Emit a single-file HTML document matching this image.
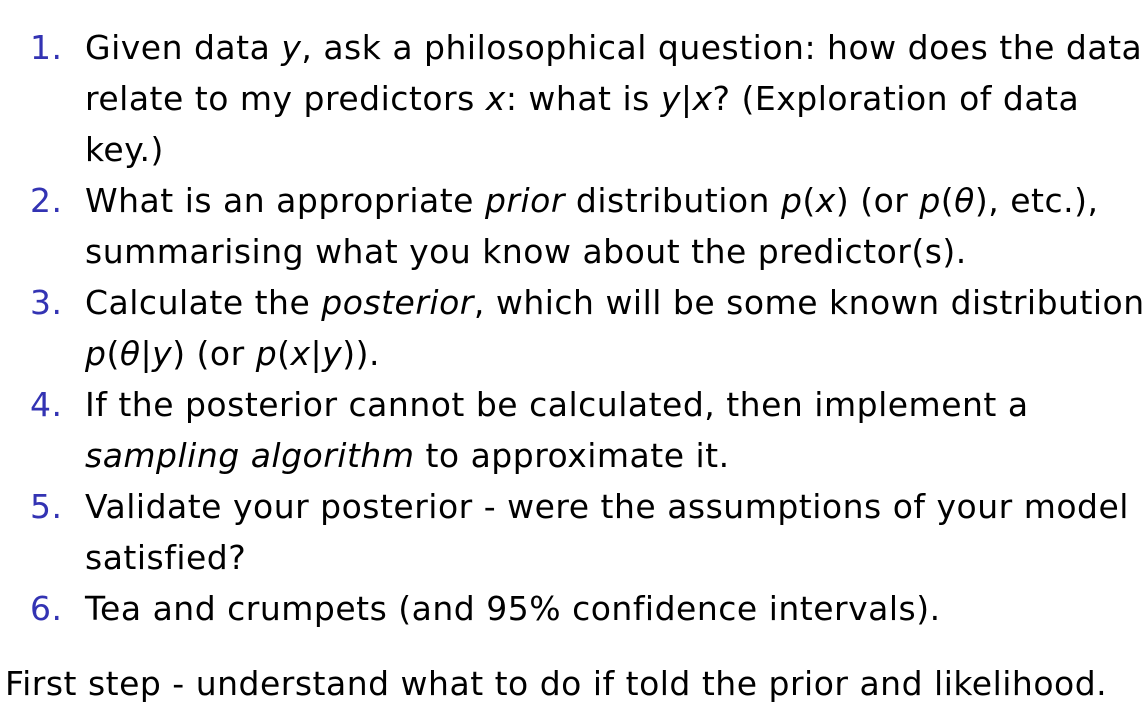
<!DOCTYPE html>
<html><head><meta charset="utf-8"><style>
html,body{margin:0;padding:0;background:#fff;}
body{width:1146px;height:708px;overflow:hidden;position:relative;font-family:"DejaVu Sans","Liberation Sans",sans-serif;font-size:33px;color:#000;letter-spacing:0.5px;}
.l{position:absolute;left:85px;white-space:nowrap;line-height:51px;}
.n{position:absolute;left:30px;color:#3333b3;line-height:51px;}
i{font-style:oblique;}
</style></head><body>
<div class="n" style="top:22px">1.</div>
<div class="l" style="top:22px">Given data <i>y</i>, ask a philosophical question: how does the data</div>
<div class="l" style="top:73px">relate to my predictors <i>x</i>: what is <i>y</i>|<i>x</i>? (Exploration of data</div>
<div class="l" style="top:124px">key.)</div>
<div class="n" style="top:175px">2.</div>
<div class="l" style="top:175px">What is an appropriate <i>prior</i> distribution <i>p</i>(<i>x</i>) (or <i>p</i>(<i>θ</i>), etc.),</div>
<div class="l" style="top:226px">summarising what you know about the predictor(s).</div>
<div class="n" style="top:277px">3.</div>
<div class="l" style="top:277px">Calculate the <i>posterior</i>, which will be some known distribution</div>
<div class="l" style="top:328px"><i>p</i>(<i>θ</i>|<i>y</i>) (or <i>p</i>(<i>x</i>|<i>y</i>)).</div>
<div class="n" style="top:379px">4.</div>
<div class="l" style="top:379px">If the posterior cannot be calculated, then implement a</div>
<div class="l" style="top:430px"><i>sampling algorithm</i> to approximate it.</div>
<div class="n" style="top:481px">5.</div>
<div class="l" style="top:481px">Validate your posterior - were the assumptions of your model</div>
<div class="l" style="top:532px">satisfied?</div>
<div class="n" style="top:583px">6.</div>
<div class="l" style="top:583px">Tea and crumpets (and 95% confidence intervals).</div>
<div class="l" style="top:658px;left:5px">First step - understand what to do if told the prior and likelihood.</div>
</body></html>
